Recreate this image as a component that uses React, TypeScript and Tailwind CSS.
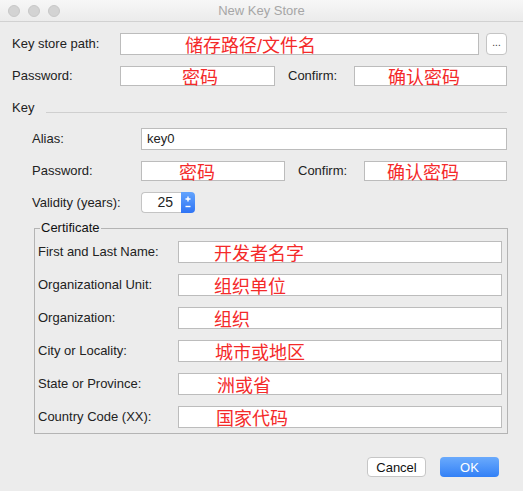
import React from "react";

const FONT = '"Liberation Sans", "Noto Sans CJK SC", sans-serif';

function Field({
  hint,
  pad = 36,
  className = "",
}: {
  hint?: string;
  pad?: number;
  className?: string;
}) {
  return (
    <div
      className={`flex items-center bg-white border border-[#bcbcbc] text-[#f42a2a] text-[18px] leading-none whitespace-nowrap ${className}`}
    >
      {hint && (
        <span className="pt-[3px]" style={{ paddingLeft: pad - 1 }}>
          {hint}
        </span>
      )}
    </div>
  );
}

function CertRow({ label, hint, pad }: { label: string; hint: string; pad: number }) {
  return (
    <div className="flex items-center h-[22px]">
      <span className="w-[140px] shrink-0">{label}</span>
      <Field hint={hint} pad={pad} className="h-[22px] w-[324px]" />
    </div>
  );
}

export default function App() {
  return (
    <div
      className="w-[523px] h-[491px] bg-[#ececec] text-[13px] text-[#222] overflow-hidden"
      style={{ fontFamily: FONT }}
    >
      {/* title bar */}
      <div className="grid grid-cols-[1fr_auto_1fr] items-center h-[22px] border-b border-[#d1d1d1] bg-gradient-to-b from-[#f7f7f7] to-[#ebebeb]">
        <div className="flex gap-[8px] pl-[8px]">
          <span className="w-[12px] h-[12px] rounded-full bg-[#d3d3d3] border border-[#c8c8c8]" />
          <span className="w-[12px] h-[12px] rounded-full bg-[#d3d3d3] border border-[#c8c8c8]" />
          <span className="w-[12px] h-[12px] rounded-full bg-[#d3d3d3] border border-[#c8c8c8]" />
        </div>
        <span className="text-[#a6a6a6] text-[13px]">New Key Store</span>
        <div />
      </div>

      <div className="pl-[12px] pr-[16px]">
        <div className="flex items-center h-[22px] mt-[11px]">
          <span className="w-[108px] shrink-0">Key store path:</span>
          <Field hint="储存路径/文件名" pad={65} className="h-[22px] flex-1" />
          <button className="ml-[7px] w-[21px] h-[22px] bg-white border border-[#c4c4c4] rounded-[4px] text-[10px] leading-none text-[#333] pb-[2px]">
            ...
          </button>
        </div>

        <div className="flex items-center h-[20px] mt-[11px]">
          <span className="w-[108px] shrink-0">Password:</span>
          <Field hint="密码" pad={62} className="h-[20px] w-[155px]" />
          <span className="ml-[13px] w-[66px] shrink-0">Confirm:</span>
          <Field hint="确认密码" pad={34} className="h-[20px] flex-1" />
        </div>

        <div className="flex items-center h-[16px] mt-[14px]">
          <span>Key</span>
          <div className="flex-1 h-px bg-[#cfcfcf] ml-[12px] mt-[8px]" />
        </div>

        <div className="pl-[20px]">
          <div className="flex items-center h-[22px] mt-[12px]">
            <span className="w-[109px] shrink-0">Alias:</span>
            <div className="flex-1 h-[22px] bg-white border border-[#bcbcbc] flex items-center pl-[5px]">
              key0
            </div>
          </div>

          <div className="flex items-center h-[20px] mt-[11px]">
            <span className="w-[109px] shrink-0">Password:</span>
            <Field hint="密码" pad={38} className="h-[20px] w-[144px]" />
            <span className="ml-[13px] w-[66px] shrink-0">Confirm:</span>
            <Field hint="确认密码" pad={23} className="h-[20px] flex-1" />
          </div>

          <div className="flex items-center h-[21px] mt-[11px]">
            <span className="w-[109px] shrink-0">Validity (years):</span>
            <div className="flex h-[21px]">
              <div className="w-[40px] bg-white border border-[#c4c4c4] border-r-0 rounded-l-[4px] flex items-center justify-end pr-[8px] text-[14px]">
                25
              </div>
              <div className="w-[14px] rounded-r-[4px] bg-gradient-to-b from-[#62a3fd] to-[#2f74f5] flex items-center justify-center">
                <svg width="8" height="15" viewBox="0 0 8 15" fill="none" stroke="white" strokeWidth="1.4">
                  <path d="M4 1.5v5M1.5 4h5" />
                  <path d="M1.5 11.5h5" />
                </svg>
              </div>
            </div>
          </div>
        </div>

        <fieldset className="ml-[22px] mt-[7px] border border-[#b4b4b4] pl-[3px] pr-[5px] pt-[5px] pb-[5px] flex flex-col gap-[11px]">
          <legend className="ml-[2px] px-px leading-[16px] text-[13px] text-[#111]">Certificate</legend>
          <CertRow label="First and Last Name:" hint="开发者名字" pad={36} />
          <CertRow label="Organizational Unit:" hint="组织单位" pad={36} />
          <CertRow label="Organization:" hint="组织" pad={36} />
          <CertRow label="City or Locality:" hint="城市或地区" pad={37} />
          <CertRow label="State or Province:" hint="洲或省" pad={39} />
          <CertRow label="Country Code (XX):" hint="国家代码" pad={38} />
        </fieldset>

        <div className="flex justify-end gap-[14px] mt-[23px] pr-[8px]">
          <button className="w-[59px] h-[20px] bg-white border border-[#c6c6c6] rounded-[4px] text-[13px] leading-none text-[#111]">
            Cancel
          </button>
          <button className="w-[59px] h-[20px] rounded-[4px] bg-gradient-to-b from-[#6aaafc] to-[#3280f6] text-white text-[13px] leading-none">
            OK
          </button>
        </div>
      </div>
    </div>
  );
}
